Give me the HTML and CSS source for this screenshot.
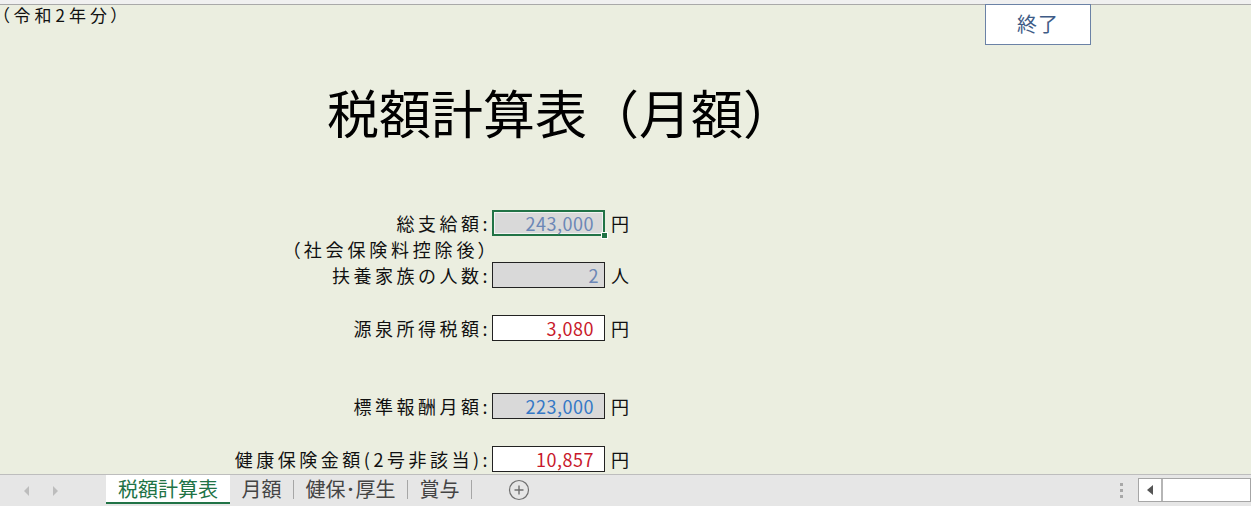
FILE: index.html
```html
<!DOCTYPE html>
<html lang="ja">
<head>
<meta charset="utf-8">
<title>税額計算表</title>
<link rel="stylesheet" href="styles.css">
</head>
<body>
<div class="topstrip"></div>
<div class="sheet">
  <div class="header">
    <div class="note">（令和2年分）</div>
    <div class="endbtn">終了</div>
  </div>
  <h1 class="title">税額計算表（月額）</h1>
  <div class="form">
    <div class="label">総支給額:</div>
    <div class="box gray selected"><span class="val muted pad">243,000</span><i class="handle"></i></div>
    <div class="unit">円</div>

    <div class="label sub">（社会保険料控除後）</div>
    <div></div><div></div>

    <div class="label">扶養家族の人数:</div>
    <div class="box gray"><span class="val muted">2</span></div>
    <div class="unit">人</div>

    <div class="blank"></div><div></div><div></div>

    <div class="label">源泉所得税額:</div>
    <div class="box white"><span class="val red pad">3,080</span></div>
    <div class="unit">円</div>

    <div class="blank"></div><div></div><div></div>
    <div class="blank"></div><div></div><div></div>

    <div class="label">標準報酬月額:</div>
    <div class="box gray"><span class="val blue pad">223,000</span></div>
    <div class="unit">円</div>

    <div class="blank"></div><div></div><div></div>

    <div class="label">健康保険金額(2号非該当):</div>
    <div class="box white"><span class="val red pad">10,857</span></div>
    <div class="unit">円</div>
  </div>
</div>
<div class="tabbar">
  <div class="navs">
    <span class="tri left"></span>
    <span class="tri right"></span>
  </div>
  <div class="tabs">
    <div class="tab active">税額計算表</div>
    <div class="tab">月額</div>
    <div class="sep"></div>
    <div class="tab">健保･厚生</div>
    <div class="sep"></div>
    <div class="tab">賞与</div>
    <div class="sep"></div>
    <div class="plus">
      <svg width="22" height="22" viewBox="0 0 22 22"><circle cx="11" cy="11" r="9.5" fill="none" stroke="#6f6f6f" stroke-width="1.2"/><path d="M11 6.5v9M6.5 11h9" stroke="#6f6f6f" stroke-width="1.4"/></svg>
    </div>
  </div>
  <div class="rightside">
    <div class="dots"><i></i><i></i><i></i></div>
    <div class="hscroll">
      <div class="hbtn"><span class="tri dark"></span></div>
      <div class="htrack"></div>
    </div>
  </div>
</div>
</body>
</html>
```
FILE: styles.css
```css
* { box-sizing: border-box; }
html, body {
  margin: 0;
  padding: 0;
  width: 1251px;
  height: 506px;
  overflow: hidden;
  font-family: "Noto Sans CJK JP", "Noto Sans", sans-serif;
  color: #111;
}
.topstrip {
  height: 5px;
  background: #f0f0f0;
  border-bottom: 1px solid #a9a9a9;
}
.sheet {
  height: 469px;
  background: #ebeee0;
  display: flex;
  flex-direction: column;
}
.header {
  display: flex;
  justify-content: space-between;
  align-items: flex-start;
  height: 40px;
  padding-right: 160px;
}
.note {
  font-size: 17px;
  line-height: 20px;
  letter-spacing: 4px;
  font-feature-settings: "palt";
  padding-left: 1px;
}
.endbtn {
  width: 106px;
  height: 41px;
  margin-top: -1px;
  background: #fff;
  border: 1px solid #6b82a6;
  color: #3e5b86;
  font-size: 20px;
  line-height: 38px;
  text-align: center;
  letter-spacing: 1px;
}
.title {
  margin: 41px 0 0 327px;
  font-size: 52px;
  font-weight: 400;
  line-height: 52px;
  color: #000;
}
.form {
  margin-top: 72px;
  display: grid;
  grid-template-columns: 492px 113px auto;
  grid-auto-rows: 26.2px;
}
.label {
  text-align: right;
  font-size: 18px;
  line-height: 26px;
  letter-spacing: 3.5px;
  padding-right: 1px;
  white-space: nowrap;
}
.label.sub {
  font-feature-settings: "palt";
  letter-spacing: 3.8px;
  padding-right: 1px;
}
.box {
  position: relative;
  height: 26px;
  border: 1px solid #222;
  display: flex;
  align-items: center;
  justify-content: flex-end;
}
.box.gray { background: #d9d9d9; }
.box.white { background: #fff; }
.box.selected {
  border: 2px solid #217346;
  box-shadow: inset 0 0 0 1px #f2f2f2;
}
.handle {
  position: absolute;
  right: -5px;
  bottom: -5px;
  width: 7px;
  height: 7px;
  background: #217346;
  border: 1px solid #fff;
}
.val {
  font-size: 18px;
  line-height: 24px;
  letter-spacing: 0.5px;
  padding-right: 5px;
}
.val.pad { padding-right: 10px; }
.selected .val.pad { padding-right: 9px; }
.muted { color: #6c87b6; }
.blue { color: #3478c6; }
.red { color: #c8192b; }
.unit {
  font-size: 18px;
  line-height: 26px;
  padding-left: 6px;
}
.tabbar {
  height: 32px;
  background: #e6e6e6;
  border-top: 1px solid #bdbdbd;
  display: flex;
  align-items: stretch;
}
.navs {
  width: 106px;
  flex-shrink: 0;
  display: flex;
  align-items: center;
  gap: 24px;
  padding-left: 24px;
}
.tri {
  width: 0;
  height: 0;
  border-top: 5px solid transparent;
  border-bottom: 5px solid transparent;
}
.tri.left { border-right: 5px solid #bdbdbd; }
.tri.right { border-left: 5px solid #bdbdbd; }
.tri.dark { border-right: 6px solid #555; }
.tabs {
  display: flex;
  align-items: stretch;
  flex: 1;
}
.tab {
  font-size: 20px;
  line-height: 27px;
  color: #444;
  padding: 0 11.5px;
  height: 29px;
}
.tab.active {
  width: 124px;
  padding: 0;
  text-align: center;
  background: #fff;
  color: #217346;
  border-bottom: 2px solid #217346;
}
.sep {
  width: 1px;
  background: #a6a6a6;
  margin: 5px 0 7px;
}
.plus {
  margin-left: 36px;
  display: flex;
  align-items: center;
  padding-bottom: 1px;
}
.rightside {
  display: flex;
  align-items: center;
  width: 138px;
  flex-shrink: 0;
}
.dots {
  width: 17px;
  flex-shrink: 0;
  display: flex;
  flex-direction: column;
  align-items: center;
  gap: 3px;
  margin-right: 8px;
}
.dots i {
  width: 3px;
  height: 3px;
  background: #a8a8a8;
}
.hscroll {
  width: 113px;
  flex-shrink: 0;
  height: 24px;
  display: flex;
  background: #fff;
  border: 1px solid #a6a6a6;
  margin-top: -1px;
}
.hbtn {
  width: 24px;
  display: flex;
  align-items: center;
  justify-content: center;
  border-right: 2px solid #b5b5b5;
}
.htrack { flex: 1; }
```
